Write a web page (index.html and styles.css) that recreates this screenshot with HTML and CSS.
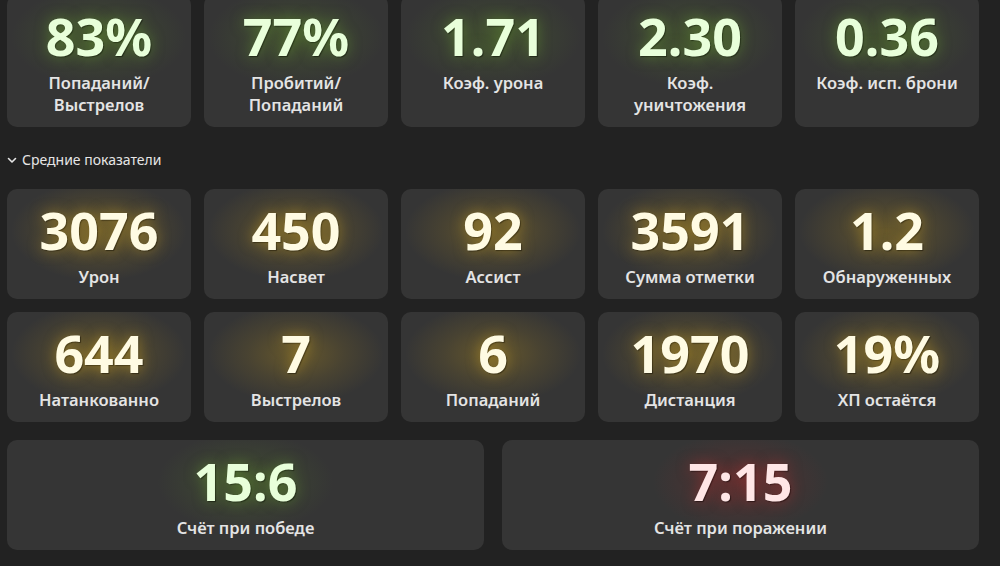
FILE: index.html
```html
<!DOCTYPE html>
<html lang="ru">
<head>
<meta charset="utf-8">
<title>Статистика</title>
<link rel="stylesheet" href="styles.css">
</head>
<body>
<div class="page">
  <div class="grid">
    <div class="card green"><div class="num">83%</div><div class="label">Попаданий/<br>Выстрелов</div></div>
    <div class="card green"><div class="num">77%</div><div class="label">Пробитий/<br>Попаданий</div></div>
    <div class="card green"><div class="num">1.71</div><div class="label">Коэф. урона</div></div>
    <div class="card green"><div class="num">2.30</div><div class="label">Коэф.<br>уничтожения</div></div>
    <div class="card green"><div class="num">0.36</div><div class="label">Коэф. исп. брони</div></div>
  </div>

  <div class="section-title">
    <svg class="chev" width="10" height="8" viewBox="0 0 10 8"><path d="M1.5 2.5 L5 6 L8.5 2.5" fill="none" stroke="#e6e6e6" stroke-width="1.6" stroke-linecap="round" stroke-linejoin="round"/></svg>
    <span>Средние показатели</span>
  </div>

  <div class="grid">
    <div class="card gold"><div class="num">3076</div><div class="label">Урон</div></div>
    <div class="card gold"><div class="num">450</div><div class="label">Насвет</div></div>
    <div class="card gold"><div class="num">92</div><div class="label">Ассист</div></div>
    <div class="card gold"><div class="num">3591</div><div class="label">Сумма отметки</div></div>
    <div class="card gold"><div class="num">1.2</div><div class="label">Обнаруженных</div></div>
    <div class="card gold"><div class="num">644</div><div class="label">Натанкованно</div></div>
    <div class="card gold"><div class="num">7</div><div class="label">Выстрелов</div></div>
    <div class="card gold"><div class="num">6</div><div class="label">Попаданий</div></div>
    <div class="card gold"><div class="num">1970</div><div class="label">Дистанция</div></div>
    <div class="card gold"><div class="num">19%</div><div class="label">ХП остаётся</div></div>
  </div>

  <div class="scores">
    <div class="card green"><div class="num">15:6</div><div class="label">Счёт при победе</div></div>
    <div class="card red"><div class="num">7:15</div><div class="label">Счёт при поражении</div></div>
  </div>
</div>
</body>
</html>
```
FILE: styles.css
```css
html, body {
  margin: 0;
  padding: 0;
  background: #222222;
  height: 100%;
  overflow: hidden;
}

body {
  font-family: "Noto Sans", "Open Sans", sans-serif;
  color: #e8e8e8;
}

.page {
  width: 972px;
  padding: 0 0 0 7px;
  margin-top: -5px;
}

.grid {
  display: grid;
  grid-template-columns: repeat(5, 1fr);
  gap: 13px;
}

.scores {
  display: grid;
  grid-template-columns: 1fr 1fr;
  gap: 18px;
  margin-top: 18px;
}

.card {
  background-color: #353535;
  border-radius: 10px;
  padding: 11px 16px 11px;
  text-align: center;
  display: flex;
  flex-direction: column;
  align-items: center;
}

.num {
  font-size: 52px;
  font-weight: 700;
  line-height: 60px;
  margin-bottom: 6px;
}

.label {
  font-size: 16.5px;
  font-weight: 600;
  line-height: 22px;
  color: #e4e4e4;
}

.green {
  background-image: radial-gradient(ellipse 88px 50px at 50% 42px, rgba(95, 140, 40, 0.32), rgba(95, 140, 40, 0.12) 55%, rgba(95, 140, 40, 0) 100%);
}

.gold {
  background-image: radial-gradient(ellipse 88px 50px at 50% 42px, rgba(190, 150, 30, 0.36), rgba(190, 150, 30, 0.14) 55%, rgba(190, 150, 30, 0) 100%);
}

.red {
  background-image: radial-gradient(ellipse 88px 50px at 50% 42px, rgba(170, 40, 40, 0.34), rgba(170, 40, 40, 0.12) 55%, rgba(170, 40, 40, 0) 100%);
}

.green .num {
  color: #e8ffda;
  text-shadow: 0 0 14px rgba(110, 170, 50, 0.5), 1px 1px 1px rgba(0, 0, 0, 0.55);
}

.gold .num {
  color: #fffbe3;
  text-shadow: 0 0 14px rgba(200, 160, 40, 0.55), 1px 1px 1px rgba(0, 0, 0, 0.55);
}

.red .num {
  color: #ffe6e6;
  text-shadow: 0 0 14px rgba(190, 50, 50, 0.5), 1px 1px 1px rgba(0, 0, 0, 0.55);
}

.section-title {
  display: flex;
  align-items: center;
  gap: 5px;
  padding: 23px 0 19px 0;
  font-size: 14px;
  line-height: 20px;
  color: #e6e6e6;
}

.chev {
  display: block;
}
```
